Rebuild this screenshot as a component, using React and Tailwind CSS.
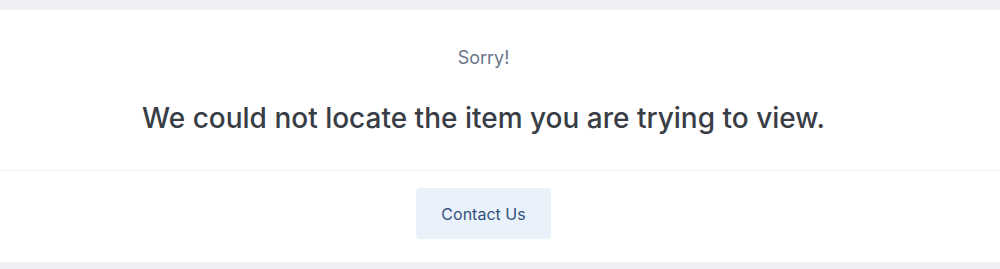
export default function App() {
  return (
    <div className="min-h-[269px] bg-[#eef0f4] pt-[10px] pb-[7px]" style={{ fontFamily: 'Inter, "Noto Sans", sans-serif' }}>
      <div className="bg-white">
        {/* message */}
        <div className="flex flex-col items-center pt-[35px] pb-[34px] pr-[33px] border-b border-[#eef0f3]">
          <p className="text-[18px] leading-[26px] text-[#6b7689]">Sorry!</p>
          <h1 className="mt-[29px] text-[28px] leading-[36px] font-medium text-[#393d45]">
            We could not locate the item you are trying to view.
          </h1>
        </div>

        {/* actions */}
        <div className="flex justify-center pt-[17px] pb-[23px] pr-[33px]">
          <button className="w-[135px] h-[51px] rounded-[4px] bg-[#e9f1fb] text-[16px] text-[#34517c]">
            Contact Us
          </button>
        </div>
      </div>
    </div>
  );
}
